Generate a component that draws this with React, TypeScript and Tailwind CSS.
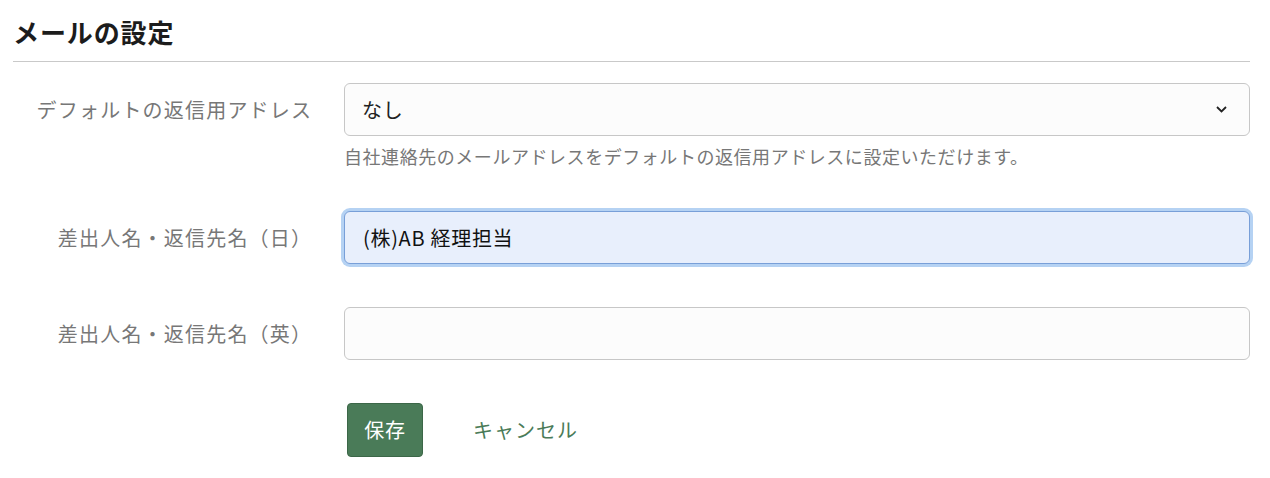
import { useState } from "react";

const font = { fontFamily: '"Noto Sans CJK JP", "Noto Sans", sans-serif' };

export default function App() {
  const [replyTo, setReplyTo] = useState("none");
  const [nameJa, setNameJa] = useState("(株)AB 経理担当");
  const [nameEn, setNameEn] = useState("");

  return (
    <div style={font} className="min-h-screen bg-white pl-[13px] pr-[20px] pt-[14px]">
      {/* 見出し */}
      <h1 className="text-[26px] leading-[36px] font-bold tracking-[0.9px] text-[#1c1c1c]">メールの設定</h1>
      <div className="mt-[11px] h-px bg-[#c9c9c9]" />

      <form className="mt-[21px] flex flex-col" onSubmit={(e) => e.preventDefault()}>
        {/* 返信用アドレス */}
        <div className="flex">
          <label className="w-[298px] h-[53px] flex items-center justify-end text-[20px] tracking-[1.2px] text-[#777]">
            <span className="-mr-[1.2px]">デフォルトの返信用アドレス</span>
          </label>
          <div className="ml-[33px] flex-1">
            <div className="relative">
              <select
                value={replyTo}
                onChange={(e) => setReplyTo(e.target.value)}
                style={font}
                className="w-full h-[53px] appearance-none rounded-[6px] border border-[#c7c7c7] bg-[#fcfcfc] pl-[17px] pr-10 text-[20px] tracking-[0.8px] text-[#222] outline-none"
              >
                <option value="none">なし</option>
              </select>
              <svg
                className="pointer-events-none absolute right-[23px] top-[23px]"
                width="11"
                height="7"
                viewBox="0 0 11 7"
                fill="none"
              >
                <path d="M1 1l4.5 4.5L10 1" stroke="#222" strokeWidth="1.8" />
              </svg>
            </div>
            <p className="mt-[8px] text-[18px] leading-[24px] tracking-[0.55px] text-[#777]">
              自社連絡先のメールアドレスをデフォルトの返信用アドレスに設定いただけます。
            </p>
          </div>
        </div>

        {/* 差出人名（日） */}
        <div className="mt-[43px] flex">
          <label className="w-[298px] h-[53px] flex items-center justify-end text-[20px] tracking-[1.2px] text-[#777]">
            <span className="-mr-[1.2px]">差出人名・返信先名（日）</span>
          </label>
          <input
            value={nameJa}
            onChange={(e) => setNameJa(e.target.value)}
            style={font}
            className="ml-[33px] flex-1 h-[53px] rounded-[6px] border border-[#789fd8] bg-[#e8effc] pl-[18px] text-[20px] tracking-[0.7px] text-[#111] outline-none shadow-[0_0_0_3px_#b5d2f3]"
          />
        </div>

        {/* 差出人名（英） */}
        <div className="mt-[43px] flex">
          <label className="w-[298px] h-[53px] flex items-center justify-end text-[20px] tracking-[1.2px] text-[#777]">
            <span className="-mr-[1.2px]">差出人名・返信先名（英）</span>
          </label>
          <input
            value={nameEn}
            onChange={(e) => setNameEn(e.target.value)}
            style={font}
            className="ml-[33px] flex-1 h-[53px] rounded-[6px] border border-[#c7c7c7] bg-[#fcfcfc] pl-[18px] text-[20px] text-[#111] outline-none"
          />
        </div>

        {/* ボタン */}
        <div className="mt-[43px] flex items-center pl-[334px]">
          <button
            type="submit"
            className="h-[54px] w-[76px] rounded-[4px] border border-[#3c6748] bg-[#4a7b58] text-[20px] tracking-[0.8px] text-white"
          >
            保存
          </button>
          <button type="button" className="ml-[50px] text-[20px] tracking-[1px] text-[#4a7b58]">
            キャンセル
          </button>
        </div>
      </form>
    </div>
  );
}
